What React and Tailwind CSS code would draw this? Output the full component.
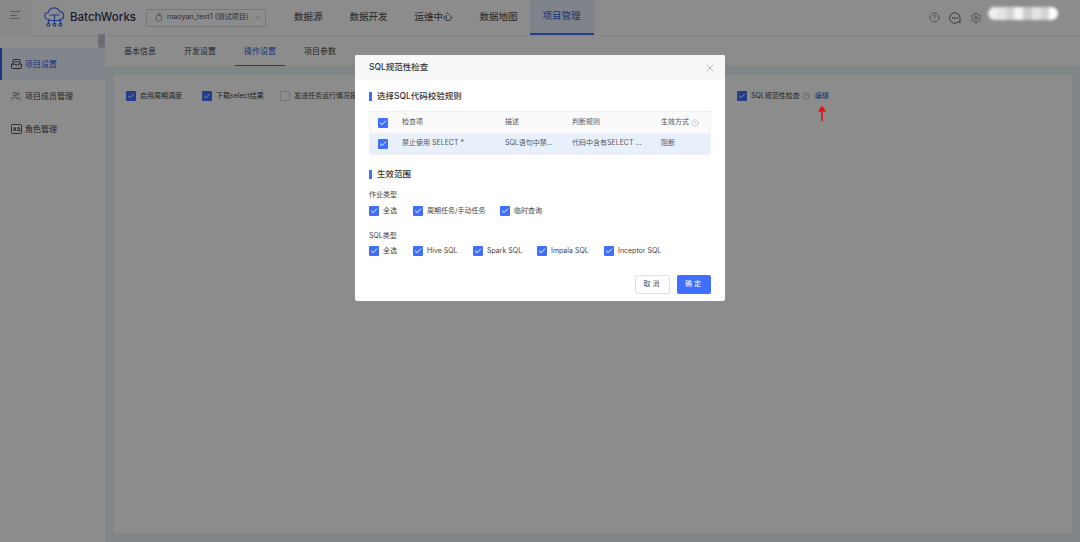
import { Check, ChevronDown, CircleHelp, Settings, X, Users, ChevronLeft } from "lucide-react";

const FONT = "font-['Inter','Noto_Sans_CJK_SC',sans-serif]";

const Box = ({ checked = true, size = "w-[10px] h-[10px]" }) => (
  <span className={`${size} shrink-0 rounded-[1px] flex items-center justify-center ${checked ? "bg-[#3f6fff]" : "bg-white border border-[#d9d9d9]"}`}>
    {checked && <Check className="w-[8px] h-[8px] text-white" strokeWidth={3} />}
  </span>
);

const Logo = () => (
  <svg width="21" height="21" viewBox="0 0 21 21" fill="none" stroke="#3f6fff" strokeWidth="1.2">
    <path d="M5.5 12.5H4.6a3.6 3.6 0 0 1-.4-7.2A6 6 0 0 1 15.6 4.6a4 4 0 0 1 .9 7.9h-1" strokeLinecap="round" />
    <path d="M6 8h9M10.5 8v8M4.5 16v-2.5h12V16" strokeLinecap="round" />
    <circle cx="4.5" cy="17.8" r="1.4" />
    <circle cx="10.5" cy="17.8" r="1.4" />
    <circle cx="16.5" cy="17.8" r="1.4" />
  </svg>
);

const ProjectIcon = () => (
  <svg width="8" height="9" viewBox="0 0 8 9" fill="none" stroke="#999" strokeWidth="0.9" className="shrink-0">
    <path d="M2.8 2.2V1h2.4v1.2" />
    <circle cx="4" cy="5.2" r="3" />
  </svg>
);

const TrayIcon = () => (
  <svg width="11" height="10" viewBox="0 0 11 10" fill="none" stroke="#333" strokeWidth="0.9" className="shrink-0">
    <path d="M2 5V1.5a1 1 0 0 1 1-1h5a1 1 0 0 1 1 1V5" />
    <path d="M3.5 2.8h4M0.6 5h3l.6 1h2.6l.6-1h3v3.5a1 1 0 0 1-1 1H1.6a1 1 0 0 1-1-1z" />
  </svg>
);

const RoleIcon = () => (
  <svg width="11" height="10" viewBox="0 0 11 10" fill="none" stroke="#333" strokeWidth="0.8" className="shrink-0">
    <rect x="0.5" y="0.5" width="10" height="9" rx="1" />
    <path d="M2.5 7l1.3-4 1.3 4M3 5.8h1.6M7 3v4h.6a1.6 1.6 0 0 0 0-3.2H7" />
  </svg>
);

const ChatIcon = () => (
  <svg width="12" height="12" viewBox="0 0 12 12" fill="none" stroke="#555" strokeWidth="0.9">
    <path d="M11 11l-1.3-1.5A5.2 5.2 0 1 1 11 6z" strokeLinejoin="round" />
    <circle cx="3.8" cy="6" r="0.4" fill="#555" />
    <circle cx="6" cy="6" r="0.4" fill="#555" />
    <circle cx="8.2" cy="6" r="0.4" fill="#555" />
  </svg>
);

const navItems = ["数据源", "数据开发", "运维中心", "数据地图"];

const TopBar = () => (
  <div className="h-[36px] bg-white flex items-center border-b border-[#f0f0f0] shrink-0">
    <div className="w-[31px] h-full shrink-0 bg-[#fafafa] flex flex-col justify-center gap-[2.6px] pl-[10px] pb-[5px]">
      <span className="w-[10px] h-px bg-[#aaa]" />
      <span className="w-[7px] h-px bg-[#aaa]" />
      <span className="w-[9px] h-px bg-[#aaa]" />
    </div>
    <div className="ml-[13px]"><Logo /></div>
    <span className="ml-[5px] text-[11.5px] font-medium text-[#2c3350] w-[68px]">BatchWorks</span>
    <div className="ml-[8px] w-[120px] h-[18px] border border-[#d9d9d9] rounded-[2px] flex items-center pl-[8px] text-[7.2px] text-[#555]">
      <ProjectIcon />
      <span className="ml-[4px] whitespace-nowrap">maoyan_test1 (测试项目)</span>
      <ChevronDown className="w-[7px] h-[7px] ml-[5px] text-[#999]" />
    </div>
    <div className="ml-[28px] flex gap-[27px] text-[9.5px] text-[#444]">
      {navItems.map((n) => <span key={n}>{n}</span>)}
    </div>
    <div className="ml-[12px] h-full w-[64px] bg-[#e8eefc] border-b-2 border-[#3f6fff] text-[#2f5be0] text-[9.5px] flex items-center justify-center">
      项目管理
    </div>
    <div className="ml-auto mr-[98px] flex items-center gap-[9px] text-[#555]">
      <CircleHelp className="w-[11px] h-[11px]" strokeWidth={1.2} />
      <ChatIcon />
      <Settings className="w-[12px] h-[12px]" strokeWidth={1.2} />
    </div>
  </div>
);

const Sidebar = () => (
  <div className="w-[105px] shrink-0 bg-white pt-[12px] text-[8px] text-[#444] relative">
    <div className="h-[32px] flex items-center bg-[#ecf3ff] border-l-2 border-[#2f5be0] text-[#2f5be0] pl-[9px] gap-[3px]">
      <TrayIcon />
      <span>项目设置</span>
    </div>
    <div className="h-[32px] flex items-center pl-[11px] gap-[4px]">
      <Users className="w-[10px] h-[10px] text-[#333]" strokeWidth={1.3} />
      <span>项目成员管理</span>
    </div>
    <div className="h-[32px] flex items-center pl-[11px] gap-[3px] mt-px">
      <RoleIcon />
      <span>角色管理</span>
    </div>
    <div className="absolute right-0 top-[-2px] w-[7px] h-[14px] bg-[#c4c9cf] rounded-l-[2px] flex items-center justify-center">
      <ChevronLeft className="w-[5px] h-[5px] text-[#555]" />
    </div>
  </div>
);

const tabs = ["基本信息", "开发设置", "操作设置", "项目参数"];

const Tabs = () => (
  <div className="h-[30px] bg-white flex pl-[5px] text-[8px] text-[#444] shrink-0">
    {tabs.map((t) => (
      <div key={t} className={`w-[50px] mx-[5px] flex items-center justify-center border-b ${t === "操作设置" ? "text-[#2f5be0] border-[#3f6fff]" : "border-transparent"}`}>
        {t}
      </div>
    ))}
  </div>
);

const Card = () => (
  <div className="flex-1 bg-[#e9f3f8] pt-[9px] pl-[9px] pr-[8px] pb-[9px] flex">
    <div className="flex-1 bg-white pt-[16px] pl-[12px] text-[7px] text-[#444]">
      <div className="flex items-center h-[10px]">
        <Box />
        <span className="ml-[4px] w-[62px]">启用周期调度</span>
        <Box />
        <span className="ml-[4px] w-[64px]">下载select结果</span>
        <Box checked={false} />
        <span className="ml-[4px] w-[443px] whitespace-nowrap">发送任务运行情况报告</span>
        <Box />
        <span className="ml-[4px]">SQL规范性检查</span>
        <CircleHelp className="w-[8px] h-[8px] ml-[2px] text-[#888]" strokeWidth={1.3} />
        <span className="ml-[5px] text-[#2f5be0]">编辑</span>
      </div>
    </div>
  </div>
);

const SectionTitle = ({ children, className = "" }) => (
  <div className={`flex items-center gap-[5px] h-[10px] text-[8.5px] font-medium text-[#333] ${className}`}>
    <span className="w-[3px] h-[9px] bg-[#3f6fff]" />
    {children}
  </div>
);

const Cell = ({ w, children }) => <div className={`${w} shrink-0 whitespace-nowrap`}>{children}</div>;

const LabelCheck = ({ children, w }) => (
  <div className={`${w} flex items-center gap-[4px] shrink-0 text-[7px] text-[#444]`}>
    <Box size="w-[10px] h-[10px]" />
    <span className="whitespace-nowrap">{children}</span>
  </div>
);

const Modal = () => (
  <div className="w-[370px] h-[246px] bg-white rounded-[2px] overflow-hidden flex flex-col">
    <div className="h-[25px] bg-[#f7f7f7] flex items-center justify-between pl-[14px] pr-[9px] shrink-0">
      <span className="text-[8.5px] font-medium text-[#333]">SQL规范性检查</span>
      <X className="w-[12px] h-[12px] text-[#777]" strokeWidth={1} />
    </div>
    <div className="px-[14px] flex-1 flex flex-col">
      <SectionTitle className="mt-[11px]">选择SQL代码校验规则</SectionTitle>
      <div className="mt-[10px] border border-[#f0f0f0] text-[7px] text-[#555]">
        <div className="h-[21px] bg-[#fafafa] flex items-center pl-[8px]">
          <Cell w="w-[24px]"><Box /></Cell>
          <Cell w="w-[103px]">检查项</Cell>
          <Cell w="w-[67px]">描述</Cell>
          <Cell w="w-[89px]">判断规则</Cell>
          <div className="flex items-center gap-[2px]">生效方式<CircleHelp className="w-[8px] h-[8px] text-[#999]" strokeWidth={1.2} /></div>
        </div>
        <div className="h-[21px] bg-[#e8f1fb] flex items-center pl-[8px]">
          <Cell w="w-[24px]"><Box /></Cell>
          <Cell w="w-[103px]">禁止使用 SELECT *</Cell>
          <Cell w="w-[67px]">SQL语句中禁...</Cell>
          <Cell w="w-[89px]">代码中含有SELECT ...</Cell>
          <span>阻断</span>
        </div>
      </div>
      <SectionTitle className="mt-[14px]">生效范围</SectionTitle>
      <div className="mt-[11px] text-[7px] text-[#444] h-[10px] leading-[10px]">作业类型</div>
      <div className="mt-[6px] flex">
        <LabelCheck w="w-[44px]">全选</LabelCheck>
        <LabelCheck w="w-[87px]">周期任务/手动任务</LabelCheck>
        <LabelCheck>临时查询</LabelCheck>
      </div>
      <div className="mt-[14px] text-[7px] text-[#444] h-[10px] leading-[10px]">SQL类型</div>
      <div className="mt-[5px] flex">
        <LabelCheck w="w-[44px]">全选</LabelCheck>
        <LabelCheck w="w-[60px]">Hive SQL</LabelCheck>
        <LabelCheck w="w-[64px]">Spark SQL</LabelCheck>
        <LabelCheck w="w-[67px]">Impala SQL</LabelCheck>
        <LabelCheck>Inceptor SQL</LabelCheck>
      </div>
      <div className="mt-auto mb-[7px] flex justify-end gap-[7px] text-[7px]">
        <button className="w-[35px] h-[19px] border border-[#e0e0e0] rounded-[2px] text-[#555] tracking-[2px]">取消</button>
        <button className="w-[34px] h-[19px] bg-[#3f6fff] rounded-[2px] text-white tracking-[2px]">确定</button>
      </div>
    </div>
  </div>
);

const mosaic = ["bg-[#eee]", "bg-[#e4e4e4]", "bg-[#d4d4d4]", "bg-[#f4f4f4]", "bg-[#ccc]", "bg-[#e4e4e4]", "bg-[#d4d4d4]", "bg-white"];

const App = () => (
  <div className={`w-full h-[542px] overflow-hidden relative flex flex-col bg-white ${FONT}`}>
    <TopBar />
    <div className="flex-1 flex min-h-0">
      <Sidebar />
      <div className="flex-1 flex flex-col min-w-0">
        <Tabs />
        <Card />
      </div>
    </div>
    {/* dim layer and dialog */}
    <div className="absolute inset-0 bg-black/45 flex justify-center pt-[55px]">
      <Modal />
    </div>
    {/* annotation arrow, drawn over the dim layer */}
    <svg width="10" height="17" viewBox="0 0 10 17" className="absolute left-[817px] top-[105px]">
      <path d="M5 6.5V16" fill="none" stroke="#e0141c" strokeWidth="1.6" />
      <path d="M5 0.5L9.2 6.8H0.8z" fill="#e0141c" />
    </svg>
    {/* blurred user name */}
    <div className="absolute left-[988px] top-[7px] w-[70px] h-[13px] flex rounded-full overflow-hidden blur-[1.5px]">
      {mosaic.map((c, i) => <span key={i} className={`flex-1 ${c}`} />)}
    </div>
  </div>
);

export default App;
